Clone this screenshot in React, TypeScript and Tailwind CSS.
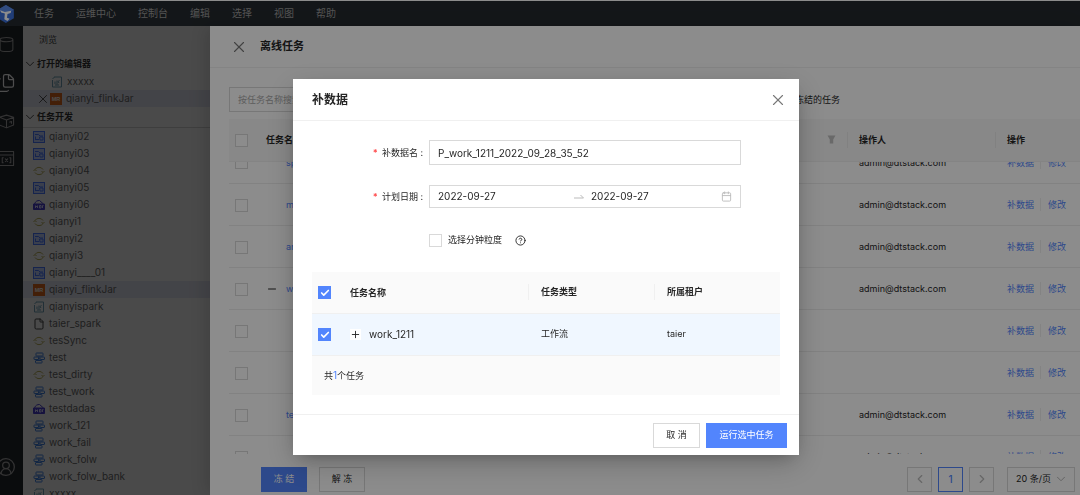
import React, { useState } from "react";
import { Calendar, Check, ChevronDown, ChevronLeft, ChevronRight, CircleHelp, CircleUserRound, File, Files, Minus, Plus, X } from "lucide-react";

type FileKind = "sql" | "sync" | "hadoop" | "mr" | "spark" | "file" | "flow";

const menus = ["任务", "运维中心", "控制台", "编辑", "选择", "视图", "帮助"];

const files: { name: string; kind: FileKind }[] = [
  { name: "qianyi02", kind: "sql" },
  { name: "qianyi03", kind: "sql" },
  { name: "qianyi04", kind: "sync" },
  { name: "qianyi05", kind: "sql" },
  { name: "qianyi06", kind: "hadoop" },
  { name: "qianyi1", kind: "sync" },
  { name: "qianyi2", kind: "sql" },
  { name: "qianyi3", kind: "sync" },
  { name: "qianyi____01", kind: "sql" },
  { name: "qianyi_flinkJar", kind: "mr" },
  { name: "qianyispark", kind: "spark" },
  { name: "taier_spark", kind: "file" },
  { name: "tesSync", kind: "sync" },
  { name: "test", kind: "flow" },
  { name: "test_dirty", kind: "sync" },
  { name: "test_work", kind: "flow" },
  { name: "testdadas", kind: "hadoop" },
  { name: "work_121", kind: "flow" },
  { name: "work_fail", kind: "flow" },
  { name: "work_folw", kind: "flow" },
  { name: "work_folw_bank", kind: "flow" },
  { name: "xxxxx", kind: "spark" },
];

const tasks: { name: string; owner: string; open?: boolean }[] = [
  { name: "spark", owner: "admin@dtstack.com" },
  { name: "mr", owner: "admin@dtstack.com" },
  { name: "ar", owner: "admin@dtstack.com" },
  { name: "work", owner: "admin@dtstack.com", open: true },
  { name: "", owner: "" },
  { name: "", owner: "" },
  { name: "te", owner: "admin@dtstack.com" },
  { name: "", owner: "admin@dtstack.com" },
];

function FileIcon({ kind }: { kind: FileKind }) {
  if (kind === "file") return <File className="size-3 shrink-0 text-[#444]" strokeWidth={2} />;
  return (
    <svg viewBox="0 0 24 24" className="size-3 shrink-0" fill="none" strokeWidth={2}>
      {kind === "sql" && (
        <g stroke="#4c7bff">
          <rect x="1" y="1" width="22" height="22" fill="#c3d2ff" />
          <path d="M4 7h7l3 3h6M4 17h8M5 11v6M13 12h7v6h-6z" />
        </g>
      )}
      {kind === "sync" && (
        <g stroke="#b5ab55">
          <path d="M4 9a9 8 0 0 1 16 0M20 15a9 8 0 0 1-16 0" />
          <path d="M1 12l3-3 3 3M17 12l3 3 3-3" />
        </g>
      )}
      {kind === "hadoop" && (
        <g stroke="#4a3fd0">
          <path d="M3 10c2-6 6-7 10-7l8 7" />
          <path d="M1 10h22v11H1z" fill="#4a3fd0" />
          <path d="M5 13v5M9 13v5M5 15h4M13 13v5h3v-5zM19 18v-5h2" stroke="#d6d3ff" />
        </g>
      )}
      {kind === "mr" && (
        <>
          <rect width="24" height="24" fill="#e06a1c" />
          <text x="12" y="16" textAnchor="middle" fontSize="11" fontWeight="700" fill="#fff" fontFamily="Liberation Sans, sans-serif">MR</text>
        </>
      )}
      {kind === "spark" && (
        <g stroke="#6f9fb4">
          <path d="M6 2h15v20H3V8M3 6l4-4" />
          <path d="M8 16v-5M12 17V9M16 14l-2-3 3-2M8 18h8" />
        </g>
      )}
      {kind === "flow" && (
        <g stroke="#3f7fe0">
          <rect x="6" y="2" width="14" height="6" rx="1" />
          <rect x="2" y="10" width="9" height="5" rx="1" />
          <rect x="14" y="10" width="9" height="5" rx="1" />
          <path d="M12 8v9" />
          <rect x="5" y="17" width="13" height="5" rx="1" />
        </g>
      )}
    </svg>
  );
}

function Logo() {
  return (
    <svg viewBox="0 0 28 34" className="h-[18px] w-[15px]">
      <path d="M11 0l15 9v16l-15 9L-4 25V9z" fill="#3b6fd9" />
      <path d="M11 0l15 9-15 8L-4 9z" fill="#5a8bea" />
      <path d="M0 10l9 3 12-2-1 4-6 2-1 7 5 2-4 4-6-3 1-11-7-2z" fill="#fff" />
    </svg>
  );
}

function BarIcon({ children }: { children: React.ReactNode }) {
  return (
    <svg viewBox="0 0 24 24" className="size-[17px]" fill="none" stroke="currentColor" strokeWidth={1.5} strokeLinejoin="round">
      {children}
    </svg>
  );
}

function Checkbox({ label, checked = false }: { label: string; checked?: boolean }) {
  const [on, setOn] = useState(checked);
  return (
    <span className="inline-grid size-[13px] shrink-0 place-items-center align-middle">
      <input
        type="checkbox"
        aria-label={label}
        checked={on}
        onChange={(e) => setOn(e.target.checked)}
        className="peer col-start-1 row-start-1 size-[13px] appearance-none border border-[#d9d9d9] bg-white checked:border-[#5285fd] checked:bg-[#5285fd]"
      />
      <Check className="pointer-events-none invisible col-start-1 row-start-1 size-[10px] text-white peer-checked:visible" strokeWidth={4} />
    </span>
  );
}

function Sidebar() {
  return (
    <aside className="flex w-[187px] shrink-0 flex-col overflow-hidden bg-[#f7f7f7] text-[10px] text-[#6a6a6a]">
      <div className="h-7 shrink-0 px-4 text-[9px] leading-7 text-[#444]">浏览</div>
      <button className="flex h-[19px] shrink-0 items-center text-[9px] font-bold text-[#333]">
        <ChevronDown className="size-[14px]" strokeWidth={1.5} /> 打开的编辑器
      </button>
      <div className="flex h-[17px] shrink-0 items-center gap-1 pl-7"><FileIcon kind="spark" />xxxxx</div>
      <div className="flex h-[17px] shrink-0 items-center bg-[#e1e2ee] pl-[13px]">
        <X className="size-[14px] text-[#444]" strokeWidth={1.5} />
        <span className="flex items-center gap-1"><FileIcon kind="mr" />qianyi_flinkJar</span>
      </div>
      <button className="flex h-[21px] shrink-0 items-center border-b border-[#d0d0d0] text-[9px] font-bold text-[#333]">
        <ChevronDown className="size-[14px]" strokeWidth={1.5} /> 任务开发
      </button>
      <ul className="min-h-0 flex-1 overflow-hidden">
        {files.map((f) => (
          <li key={f.name} className={"flex h-[17px] items-center gap-1 pl-[10px] " + (f.kind === "mr" ? "bg-[#e1e2ee]" : "")}>
            <FileIcon kind={f.kind} />
            {f.name}
          </li>
        ))}
      </ul>
    </aside>
  );
}

function Funnel() {
  return (
    <svg viewBox="0 0 16 16" className="ml-5 size-[9px]" fill="#bfbfbf">
      <path d="M1 1h14l-4 7v7H5V8z" />
    </svg>
  );
}

function TaskDrawer() {
  return (
    <section className="absolute inset-y-0 right-0 left-[210px] flex flex-col bg-white text-[9px] text-[#262626] shadow-[-6px_0_16px_rgba(0,0,0,0.12)]">
      <header className="flex h-[42px] shrink-0 items-center gap-3 border-b border-[#f0f0f0] px-5">
        <button aria-label="关闭"><X className="size-[18px] text-[#777]" strokeWidth={1.5} /></button>
        <h2 className="text-[11px] font-bold">离线任务</h2>
      </header>

      <div className="flex shrink-0 items-center pt-[19px] pl-[19px]">
        <input aria-label="按任务名称搜索" placeholder="按任务名称搜索" className="h-[25px] w-40 border border-[#d9d9d9] px-2 placeholder:text-[#aaa]" />
        <label className="mr-60 ml-auto flex items-center gap-1"><Checkbox label="冻结的任务" />冻结的任务</label>
      </div>

      <div className="mt-[7px] flex min-h-0 flex-1 flex-col overflow-hidden pl-[19px]">
        <table className="w-full shrink-0 table-fixed text-left">
          <thead>
            <tr className="h-[42px] border-b border-[#f0f0f0] bg-[#f7f7f7]">
              <th className="w-[25px] text-center"><Checkbox label="全选" /></th>
              <th className="pl-3">任务名称</th>
              <th className="w-10"><Funnel /></th>
              <th className="w-[148px]"><span className="block border-l border-[#ececec] pl-[11px] leading-4">操作人</span></th>
              <th className="w-[85px]"><span className="block border-l border-[#ececec] pl-[11px] leading-4">操作</span></th>
            </tr>
          </thead>
        </table>
        <div className="min-h-0 flex-1 overflow-hidden">
          {/* the list is scrolled half a row down */}
          <table className="-mt-5 w-full table-fixed text-left">
            <tbody>
              {tasks.map((t, i) => (
                <tr key={i} className="h-[42px] border-b border-[#ededed]">
                  <td className="w-[25px] text-center"><Checkbox label={"任务" + (i + 1)} /></td>
                  <td className="pl-3">
                    <span className="flex items-center gap-2 text-[#5285fd]">
                      <span className="grid size-3 place-items-center">
                        {t.open && <Minus className="size-3 text-[#262626]" />}
                      </span>
                      <a href="#">{t.name}</a>
                    </span>
                  </td>
                  <td className="w-[148px] pl-3">{t.owner}</td>
                  <td className="w-[85px] pl-3">
                    <span className="flex text-[#5285fd]">
                      <a href="#">补数据</a>
                      <a href="#" className="ml-[6px] border-l border-[#eee] pl-[7px]">修改</a>
                    </span>
                  </td>
                </tr>
              ))}
            </tbody>
          </table>
        </div>
      </div>

      <footer className="flex h-[41px] shrink-0 items-center gap-[6px] pt-[9px] pr-[5px] pl-[51px]">
        <button className="h-[25px] w-[46px] bg-[#5285fd] text-white">冻 结</button>
        <button className="ml-[6px] h-[25px] w-[46px] border border-[#d9d9d9]">解 冻</button>
        <button aria-label="上一页" className="ml-auto grid size-[25px] place-items-center border border-[#d9d9d9] text-[#bbb]"><ChevronLeft className="size-[14px]" /></button>
        <button className="size-[25px] border border-[#5285fd] text-[10px] font-medium text-[#5285fd]">1</button>
        <button aria-label="下一页" className="grid size-[25px] place-items-center border border-[#d9d9d9] text-[#bbb]"><ChevronRight className="size-[14px]" /></button>
        <span className="ml-[7px] grid h-[25px] w-[68px] items-center border border-[#d9d9d9]">
          <select aria-label="每页条数" className="col-start-1 row-start-1 h-full w-full appearance-none bg-transparent pl-2">
            <option>20 条/页</option>
          </select>
          <ChevronDown className="pointer-events-none col-start-1 row-start-1 mr-[6px] size-[14px] justify-self-end text-[#aaa]" strokeWidth={1.5} />
        </span>
      </footer>
    </section>
  );
}

function FillDataModal() {
  const [name, setName] = useState("P_work_1211_2022_09_28_35_52");
  return (
    <div className="fixed inset-0 flex items-start justify-center bg-black/45 pt-[79px] pl-3">
      <div role="dialog" aria-labelledby="fill-title" className="w-[506px] bg-white text-[9px] text-[#262626] shadow-[0_6px_16px_-8px_rgba(0,0,0,0.32),0_9px_28px_0_rgba(0,0,0,0.2)]">
        <header className="flex h-[42px] items-center justify-between border-b border-[#f0f0f0] pr-3 pl-[19px]">
          <h1 id="fill-title" className="text-[12px] font-bold">补数据</h1>
          <button aria-label="关闭"><X className="size-[18px] text-[#777]" strokeWidth={1.5} /></button>
        </header>

        <div className="flex flex-col gap-5 px-[19px] py-[19px]">
          <div className="grid grid-cols-12 items-center">
            <label htmlFor="fill-name" className="col-span-3 pr-[6px] text-right"><span className="mr-1 font-bold text-[#ff4d4f]">*</span>补数据名 :</label>
            <input id="fill-name" value={name} onChange={(e) => setName(e.target.value)} className="col-span-8 h-[25px] border border-[#d9d9d9] px-2 text-[10px]" />
          </div>
          <div className="grid grid-cols-12 items-center">
            <label htmlFor="fill-start" className="col-span-3 pr-[6px] text-right"><span className="mr-1 font-bold text-[#ff4d4f]">*</span>计划日期 :</label>
            <div className="col-span-8 flex h-[23px] items-center border border-[#d9d9d9] px-2 text-[10px]">
              <input id="fill-start" defaultValue="2022-09-27" className="w-34" />
              <svg viewBox="0 0 20 10" className="mr-[7px] h-[5px] w-[10px]" fill="none" stroke="#bbb" strokeWidth={2}>
                <path d="M0 8h19l-6-6" />
              </svg>
              <input aria-label="结束日期" defaultValue="2022-09-27" className="w-0 flex-1" />
              <Calendar className="size-[11px] text-[#bbb]" />
            </div>
          </div>
          <div className="grid h-6 grid-cols-12 items-center">
            <div className="col-span-8 col-start-4 flex items-center">
              <label className="flex items-center gap-[6px]"><Checkbox label="选择分钟粒度" />选择分钟粒度</label>
              <CircleHelp className="ml-[13px] size-[11px]" />
            </div>
          </div>

          <table className="w-full table-fixed bg-[#fafafa] text-left">
            <thead>
              <tr className="h-[41px] border-b border-[#f0f0f0]">
                <th className="w-[25px] text-center"><Checkbox label="全选" checked /></th>
                <th className="pl-[13px]">任务名称</th>
                <th className="w-[126px]"><span className="block border-l border-[#f0f0f0] pl-3 leading-4">任务类型</span></th>
                <th className="w-[126px]"><span className="block border-l border-[#f0f0f0] pl-3 leading-4">所属租户</span></th>
              </tr>
            </thead>
            <tbody>
              <tr className="h-[42px] border-b border-[#f0f0f0] bg-[#f0f7ff]">
                <td className="text-center"><Checkbox label="work_1211" checked /></td>
                <td className="pl-[13px] text-[10px]">
                  <span className="flex items-center gap-2">
                    <button aria-label="展开" className="grid size-[11px] place-items-center bg-white"><Plus className="size-[11px]" /></button>
                    work_1211
                  </span>
                </td>
                <td className="pl-[13px]">工作流</td>
                <td className="pl-[13px]">taier</td>
              </tr>
            </tbody>
            <tfoot>
              <tr className="h-10">
                <td colSpan={4} className="pl-3">共<span className="text-[10px] text-[#5285fd]">1</span>个任务</td>
              </tr>
            </tfoot>
          </table>
        </div>

        <footer className="flex h-[41px] items-center justify-end gap-[6px] border-t border-[#f0f0f0] pr-3">
          <button className="h-[25px] w-[47px] border border-[#d9d9d9]">取 消</button>
          <button className="h-[25px] w-[81px] bg-[#5285fd] text-white">运行选中任务</button>
        </footer>
      </div>
    </div>
  );
}

export default function App() {
  return (
    <div className="flex h-screen flex-col overflow-hidden font-['Inter','Noto_Sans_CJK_SC',sans-serif]">
      <header className="flex h-[26px] shrink-0 items-center border-t border-white bg-[#24292e]">
        <div className="w-[23px]"><Logo /></div>
        <nav className="flex text-[10px] text-[#999]">
          {menus.map((m) => (
            <button key={m} className="px-[11px]">{m}</button>
          ))}
        </nav>
      </header>

      <div className="relative flex min-h-0 flex-1">
        <div className="w-[23px] shrink-0 overflow-hidden bg-[#24292e]">
          <nav className="-ml-3 flex h-full w-9 flex-col items-center gap-5 pt-[10px] pb-[18px] text-[#aaa]">
            <button aria-label="数据源">
              <BarIcon><path d="M3 5v14c0 2 4 3 9 3s9-1 9-3V5c0-2-4-3-9-3S3 3 3 5c0 2 4 3 9 3s9-1 9-3" /></BarIcon>
            </button>
            <button aria-label="资源管理器" className="text-white"><Files className="size-5" strokeWidth={1.5} /></button>
            <button aria-label="资源">
              <BarIcon><path d="M12 3l10 3v11l-10 4-10-4V6zM2 6l10 4 10-4M12 10v11M16 13l3-1v3" /></BarIcon>
            </button>
            <button aria-label="函数">
              <BarIcon><path d="M2 2h20v20H2zM2 7h20M8 11H6v7h2M16 11h2v7h-2M10 12l4 5M14 12l-4 5" /></BarIcon>
            </button>
            <button aria-label="用户" className="mt-auto"><CircleUserRound className="size-5" strokeWidth={1.5} /></button>
          </nav>
        </div>
        <Sidebar />
        <div className="absolute inset-0 bg-black/45" />
        <TaskDrawer />
      </div>

      <FillDataModal />
    </div>
  );
}
